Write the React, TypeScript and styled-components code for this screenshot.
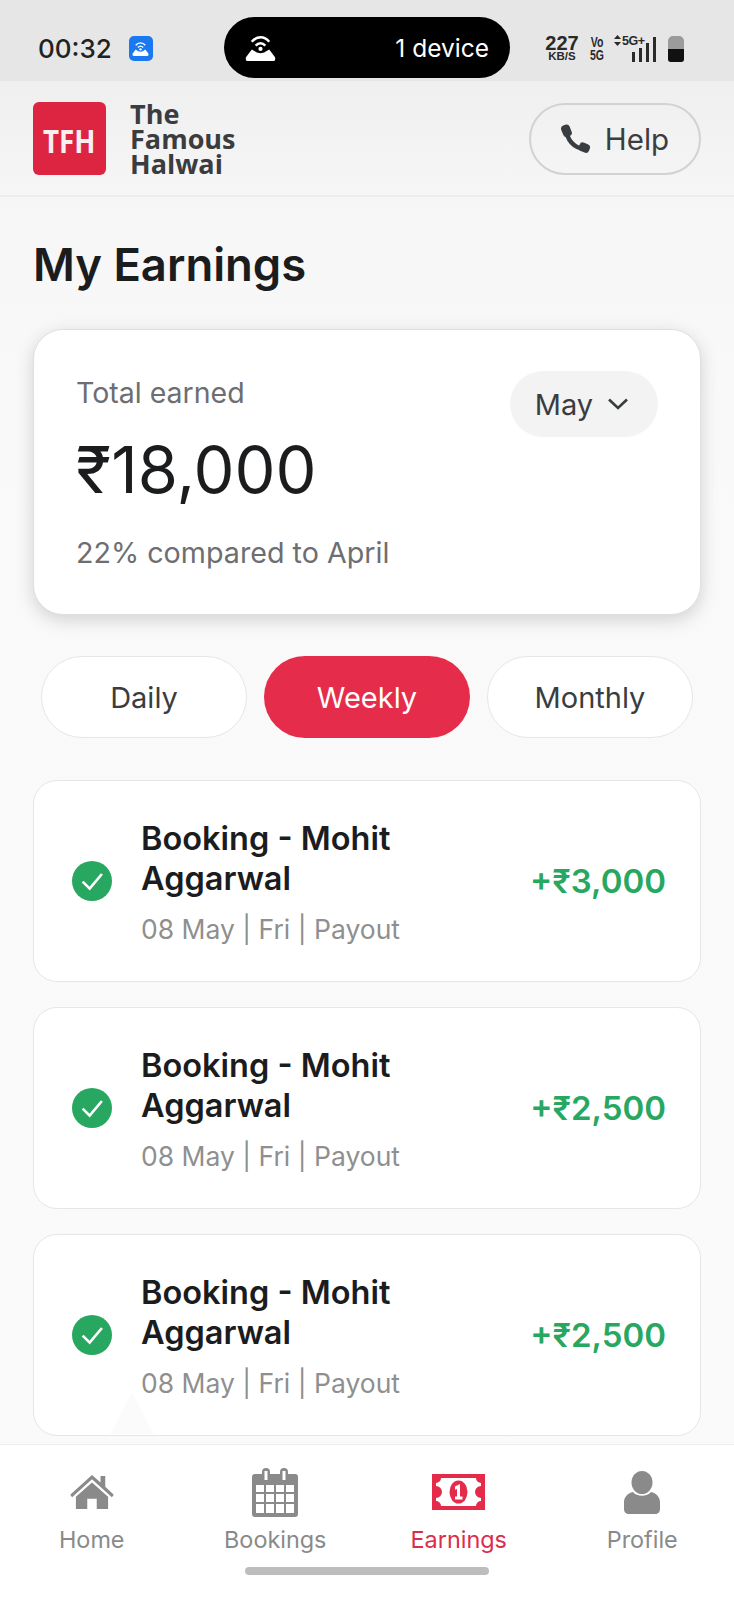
import styled, { createGlobalStyle } from "styled-components";

const bookings = [
    { name: "Booking - Mohit Aggarwal", amount: "+₹3,000" },
    { name: "Booking - Mohit Aggarwal", amount: "+₹2,500" },
    { name: "Booking - Mohit Aggarwal", amount: "+₹2,500" },
];

const HomeIcon = () => (
    <svg width="46" height="36" viewBox="0 0 48 38" fill="#8a8a8a">
        <path d="M24 1 L33 9 V2 H38 V13.5 L47 22 L45 24.5 L24 5.5 L3 24.5 L1 22 Z" />
        <path d="M24 9 L41 24 V37 H29 V26 H19 V37 H7 V24 Z" />
    </svg>
);

const CalendarIcon = () => (
    <svg width="46" height="49" viewBox="0 0 46 49">
        <path fill="#8a8a8a" d="M3 6 H10 V4 a4 4 0 0 1 8 0 V6 H28 V4 a4 4 0 0 1 8 0 V6 H43 a3 3 0 0 1 3 3 V46 a3 3 0 0 1 -3 3 H3 a3 3 0 0 1 -3 -3 V9 a3 3 0 0 1 3 -3 Z" />
        <path fill="#fff" d="M12.5 3 h3 v9 h-3 Z M30.5 3 h3 v9 h-3 Z" />
        <path fill="#fff" d="M4 17 h8 v7 h-8 Z M14 17 h8 v7 h-8 Z M24 17 h8 v7 h-8 Z M34 17 h8 v7 h-8 Z M4 26 h8 v8 h-8 Z M14 26 h8 v8 h-8 Z M24 26 h8 v8 h-8 Z M34 26 h8 v8 h-8 Z M4 36 h8 v9 h-8 Z M14 36 h8 v9 h-8 Z M24 36 h8 v9 h-8 Z M34 36 h8 v9 h-8 Z" />
    </svg>
);

const MoneyIcon = () => (
    <svg width="53" height="36" viewBox="0 0 53 36">
        <rect width="53" height="36" fill="#e42c4a" />
        <path fill="#fff" d="M9 4 H44 a5 5 0 0 0 5 5 V12 a6 6 0 0 0 0 12 V27 a5 5 0 0 0 -5 5 H9 a5 5 0 0 0 -5 -5 V24 a6 6 0 0 0 0 -12 V9 a5 5 0 0 0 5 -5 Z" />
        <ellipse cx="26.5" cy="18" rx="9" ry="11.5" fill="#e42c4a" />
        <path fill="#fff" d="M23 12.5 L28 10 V22.5 H30.5 V25.5 H23 V22.5 H25 V15 L23 15.7 Z" />
    </svg>
);

const ProfileIcon = () => (
    <svg width="36" height="43" viewBox="0 0 36 43" fill="#8a8a8a">
        <ellipse cx="18" cy="11.5" rx="10.5" ry="11.5" />
        <path d="M9 21 C13 26 23 26 27 21 C32 22 36 26 36 31 V38 C36 41 34 43 31 43 H5 C2 43 0 41 0 38 V31 C0 26 4 22 9 21 Z" />
    </svg>
);

const PhoneIcon = () => (
    <svg width="30" height="30" viewBox="0 0 30 30" fill="#3a3d40">
        <path d="M6 5 C5 15 13 25 25 25" fill="none" stroke="#3a3d40" strokeWidth="4.5" />
        <rect x="1" y="1" width="9" height="12" rx="3.5" transform="rotate(-22 5 7)" />
        <rect x="18" y="19" width="11" height="9" rx="3.5" transform="rotate(22 23 23)" />
    </svg>
);

const RouterGlyph = ({ size }: { size: number }) => (
    <svg width={size} height={size} viewBox="0 0 32 28" fill="none">
        <path d="M7 8 C12 2 20 2 25 8" stroke="#fff" strokeWidth="2.6" />
        <path d="M11 12 C14 9 18 9 21 12" stroke="#fff" strokeWidth="2.6" />
        <circle cx="16" cy="15.5" r="2.2" fill="#fff" />
        <path fill="#fff" d="M7 16 L11 18.5 C14 20.5 18 20.5 21 18.5 L25 16 L31 24 Q32 28 29 28 H3 Q0 28 1 24 Z" />
    </svg>
);

export default function App() {
    return (
        <>
            <GlobalStyle />
            <Page>
                <StatusBar>
                    <StatusLeft>
                        <Clock>00:32</Clock>
                        <AppBadge><RouterGlyph size={17} /></AppBadge>
                    </StatusLeft>
                    <Island>
                        <RouterGlyph size={31} />
                        <IslandText>1 device</IslandText>
                    </Island>
                    <StatusRight>
                        <Speed><b>227</b><span>KB/S</span></Speed>
                        <VoLte><span>Vo</span><span>5G</span></VoLte>
                        <Signal>
                            <FiveG>
                                <svg width="7" height="11" viewBox="0 0 7 11" fill="#2a2a2a">
                                    <path d="M3.5 0 L7 4 H0 Z M0 7 H7 L3.5 11 Z" />
                                </svg>
                                5G+
                            </FiveG>
                            <Bar $h={10} /><Bar $h={14} /><Bar $h={19} /><Bar $h={25} />
                        </Signal>
                        <Battery><BatteryFill /></Battery>
                    </StatusRight>
                </StatusBar>

                <Header>
                    <Brand>
                        <LogoMark><LogoText>TFH</LogoText></LogoMark>
                        <BrandName>The<br />Famous<br />Halwai</BrandName>
                    </Brand>
                    <HelpButton><PhoneIcon />Help</HelpButton>
                </Header>

                <Main>
                    <Title>My Earnings</Title>
                    <TotalCard>
                        <div>
                            <TotalLabel>Total earned</TotalLabel>
                            <TotalAmount>₹18,000</TotalAmount>
                            <TotalNote>22% compared to April</TotalNote>
                        </div>
                        <MonthPill>
                            May
                            <svg width="22" height="14" viewBox="0 0 22 14" fill="none">
                                <path d="M2 2.5 L11 11 L20 2.5" stroke="#3a3d40" strokeWidth="2.6" />
                            </svg>
                        </MonthPill>
                    </TotalCard>

                    <Tabs>
                        <Tab>Daily</Tab>
                        <Tab $active>Weekly</Tab>
                        <Tab>Monthly</Tab>
                    </Tabs>

                    <List>
                        {bookings.map((b, i) => (
                            <Row key={i}>
                                <CheckBadge>
                                    <svg width="28" height="28" viewBox="0 0 24 24" fill="none">
                                        <path d="M4 12.5 L10 18.5 L20.5 6" stroke="#fff" strokeWidth="2.3" />
                                    </svg>
                                </CheckBadge>
                                <RowText>
                                    <RowName>{b.name}</RowName>
                                    <RowMeta>08 May | Fri | Payout</RowMeta>
                                </RowText>
                                <Amount>{b.amount}</Amount>
                            </Row>
                        ))}
                    </List>
                    <FaintTriangle />
                </Main>

                <BottomNav>
                    <NavItems>
                        <NavItem><NavIcon><HomeIcon /></NavIcon>Home</NavItem>
                        <NavItem><NavIcon><CalendarIcon /></NavIcon>Bookings</NavItem>
                        <NavItem $active><NavIcon><MoneyIcon /></NavIcon>Earnings</NavItem>
                        <NavItem><NavIcon><ProfileIcon /></NavIcon>Profile</NavItem>
                    </NavItems>
                    <HomeBar />
                </BottomNav>
            </Page>
        </>
    );
}

const GlobalStyle = createGlobalStyle`
    body {
        margin: 0;
        font-family: "Inter", "Liberation Sans", sans-serif;
        background: #fafafa;
    }
`;

const Page = styled.div`
    width: 734px;
    height: 1599px;
    display: flex;
    flex-direction: column;
    overflow: hidden;
    background: linear-gradient(#f3f3f3, #f9f9f9 400px, #fafafa);
`;

const StatusBar = styled.div`
    height: 81px;
    flex: none;
    background: #e6e6e6;
    display: flex;
    align-items: center;
    padding: 16px 30px 0 38px;
    box-sizing: border-box;
`;

const StatusLeft = styled.div`
    display: flex;
    align-items: center;
    gap: 17px;
    width: 186px;
    flex: none;
`;

const Clock = styled.span`
    font-size: 26px;
    font-weight: 500;
    color: #222;
`;

const AppBadge = styled.span`
    width: 24px;
    height: 25px;
    border-radius: 5px;
    background: #1a78f0;
    display: flex;
    align-items: center;
    justify-content: center;
`;

const Island = styled.div`
    width: 286px;
    height: 61px;
    margin-top: -2px;
    flex: none;
    border-radius: 31px;
    background: #000;
    color: #fff;
    display: flex;
    align-items: center;
    justify-content: space-between;
    padding: 0 21px;
    box-sizing: border-box;
`;

const IslandText = styled.span`
    font-size: 24.5px;
    font-weight: 400;
`;

const StatusRight = styled.div`
    display: flex;
    align-items: center;
    margin-left: 36px;
    color: #2a2a2a;
`;

const Speed = styled.div`
    display: flex;
    flex-direction: column;
    align-items: center;
    width: 32px;
    flex: none;
    font-family: "Liberation Sans", sans-serif;
    b {
        font-size: 20px;
        line-height: 16px;
        font-weight: 700;
    }
    span {
        font-size: 11.5px;
        line-height: 11px;
        font-weight: 700;
    }
`;

const VoLte = styled.div`
    display: flex;
    flex-direction: column;
    align-items: center;
    width: 14px;
    flex: none;
    margin-left: 12px;
    font-size: 14px;
    font-weight: 700;
    line-height: 13px;
    font-family: "Liberation Sans", sans-serif;
    transform: scaleX(0.75);
`;

const Signal = styled.div`
    display: flex;
    align-items: flex-end;
    justify-content: flex-end;
    gap: 3.5px;
    position: relative;
    width: 42px;
    height: 26px;
    flex: none;
    margin-left: 10px;
`;

const FiveG = styled.span`
    position: absolute;
    left: 0;
    top: -1px;
    display: flex;
    align-items: center;
    gap: 1px;
    font-size: 12.5px;
    line-height: 12px;
    font-weight: 700;
    font-family: "Liberation Sans", sans-serif;
    white-space: nowrap;
    letter-spacing: -0.5px;
`;

const Bar = styled.div<{ $h: number }>`
    width: 3.5px;
    height: ${(p) => p.$h}px;
    background: #2a2a2a;
`;

const Battery = styled.div`
    width: 16px;
    height: 26px;
    margin-left: 12px;
    border-radius: 5px 5px 3px 3px;
    background: #9b9b9b;
    display: flex;
    align-items: flex-end;
    overflow: hidden;
`;

const BatteryFill = styled.div`
    width: 100%;
    height: 13px;
    background: #111;
`;

const Header = styled.header`
    height: 116px;
    flex: none;
    box-sizing: border-box;
    padding: 21px 33px 20px;
    display: flex;
    align-items: center;
    justify-content: space-between;
    border-bottom: 2px solid #ececec;
    background: linear-gradient(#efefef, #f6f6f6);
`;

const Brand = styled.div`
    display: flex;
    align-items: center;
    gap: 24px;
`;

const LogoMark = styled.div`
    width: 73px;
    height: 73px;
    border-radius: 6px;
    background: #dd2440;
    color: #f8f0f0;
    font-family: "Open Sans", sans-serif;
    font-weight: 700;
    font-size: 33px;
    display: flex;
    align-items: center;
    justify-content: center;
    padding-top: 3px;
    box-sizing: border-box;
`;

const LogoText = styled.span`
    transform: scaleX(0.84);
`;

const BrandName = styled.div`
    font-family: "Open Sans", sans-serif;
    font-size: 27px;
    font-weight: 700;
    line-height: 25px;
    color: #3a3c40;
`;

const HelpButton = styled.button`
    width: 172px;
    height: 72px;
    border-radius: 36px;
    border: 2.5px solid #d2d2d2;
    background: transparent;
    color: #3a3d40;
    font-family: inherit;
    font-size: 29.5px;
    font-weight: 400;
    display: flex;
    align-items: center;
    justify-content: center;
    gap: 14px;
    padding: 0;
`;

const Main = styled.main`
    flex: 1;
    position: relative;
    padding: 0 33px;
    overflow: hidden;
`;

const Title = styled.h1`
    margin: 38px 0 34px;
    font-size: 45.4px;
    line-height: 60px;
    font-weight: 600;
    color: #1b1c1e;
`;

const TotalCard = styled.section`
    height: 286px;
    box-sizing: border-box;
    border-radius: 30px;
    background: #fff;
    border: 1px solid #e0e0e0;
    box-shadow: 0 5px 18px rgba(0, 0, 0, 0.16);
    padding: 37px 42px 0 42px;
    display: flex;
    justify-content: space-between;
    align-items: flex-start;
`;

const TotalLabel = styled.div`
    font-size: 28.5px;
    line-height: 50px;
    margin-top: 1px;
    color: #6d6e71;
`;

const TotalAmount = styled.div`
    font-size: 65px;
    line-height: 80px;
    margin-top: 12px;
    color: #1b1c1e;
`;

const TotalNote = styled.div`
    font-size: 28.7px;
    line-height: 40px;
    margin-top: 23px;
    color: #6d6e71;
`;

const MonthPill = styled.div`
    width: 148px;
    height: 66px;
    margin-top: 4px;
    border-radius: 33px;
    background: #f3f3f3;
    color: #3a3d40;
    font-size: 29px;
    display: flex;
    align-items: center;
    justify-content: center;
    gap: 14px;
    padding-right: 4px;
    box-sizing: border-box;
`;

const Tabs = styled.div`
    display: grid;
    grid-template-columns: repeat(3, 1fr);
    gap: 17px;
    margin: 41px 8px 42px;
`;

const Tab = styled.div<{ $active?: boolean }>`
    height: 82px;
    box-sizing: border-box;
    border-radius: 41px;
    border: ${(p) => (p.$active ? "none" : "1.5px solid #e6e6e6")};
    background: ${(p) => (p.$active ? "#e62c4b" : "#fff")};
    color: ${(p) => (p.$active ? "#fff" : "#3a3d40")};
    font-size: 29px;
    display: flex;
    align-items: center;
    justify-content: center;
`;

const List = styled.div`
    display: flex;
    flex-direction: column;
    gap: 25px;
`;

const Row = styled.div`
    height: 202px;
    box-sizing: border-box;
    border-radius: 24px;
    background: #fff;
    border: 1.5px solid #e6e6e6;
    padding: 0 34px 0 38px;
    display: flex;
    align-items: center;
`;

const CheckBadge = styled.div`
    width: 40px;
    height: 40px;
    flex: none;
    border-radius: 50%;
    background: #27a75f;
    display: flex;
    align-items: center;
    justify-content: center;
`;

const RowText = styled.div`
    width: 295px;
    margin: 4px 0 0 29px;
`;

const RowName = styled.div`
    font-size: 32.5px;
    line-height: 40px;
    font-weight: 600;
    color: #1b1c1e;
`;

const RowMeta = styled.div`
    font-size: 26.5px;
    line-height: 36px;
    margin-top: 12px;
    color: #8f8f8f;
    white-space: nowrap;
`;

const Amount = styled.div`
    margin-left: auto;
    font-size: 33px;
    font-weight: 600;
    color: #27a75f;
`;

const FaintTriangle = styled.div`
    position: absolute;
    left: 110px;
    bottom: 10px;
    width: 44px;
    height: 42px;
    background: #fbfbfb;
    clip-path: polygon(50% 0, 100% 100%, 0 100%);
`;

const BottomNav = styled.nav`
    height: 155px;
    flex: none;
    box-sizing: border-box;
    background: #fff;
    border-top: 1.5px solid #eeeeee;
    display: flex;
    flex-direction: column;
    align-items: center;
`;

const NavItems = styled.div`
    width: 100%;
    display: grid;
    grid-template-columns: repeat(4, 183.5px);
    padding-top: 22px;
`;

const NavItem = styled.div<{ $active?: boolean }>`
    display: flex;
    flex-direction: column;
    align-items: center;
    font-size: 23.4px;
    color: ${(p) => (p.$active ? "#dd2c4a" : "#8a8a8a")};
`;

const NavIcon = styled.div`
    height: 50px;
    margin-bottom: 8px;
    display: flex;
    align-items: center;
    justify-content: center;
`;

const HomeBar = styled.div`
    width: 244px;
    height: 8px;
    margin-top: 13px;
    border-radius: 4px;
    background: #bdbdbd;
`;
